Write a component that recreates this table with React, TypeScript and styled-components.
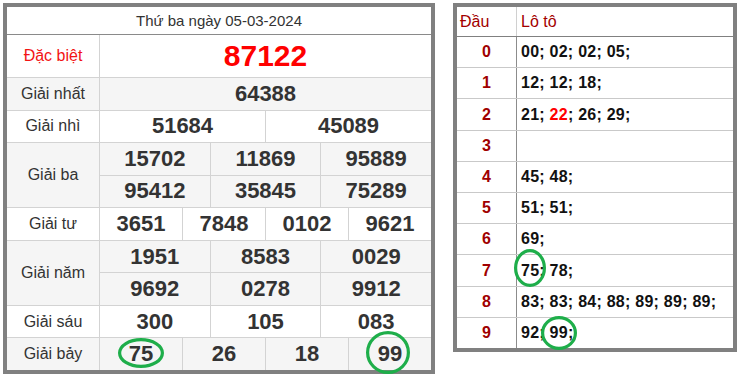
import styled, { createGlobalStyle } from 'styled-components'
import { ReactNode } from 'react'

const GlobalStyle = createGlobalStyle`
  html, body {
    margin: 0;
    padding: 0;
    background: #fff;
  }
  * {
    box-sizing: border-box;
  }
  body {
    font-family: 'Liberation Sans', Arial, sans-serif;
  }
`

type Prize = {
  label: string
  lines: string[][]
  gray?: boolean
  special?: boolean
}

const prizes: Prize[] = [
  { label: 'Đặc biệt', lines: [['87122']], special: true },
  { label: 'Giải nhất', lines: [['64388']], gray: true },
  { label: 'Giải nhì', lines: [['51684', '45089']] },
  {
    label: 'Giải ba',
    lines: [
      ['15702', '11869', '95889'],
      ['95412', '35845', '75289'],
    ],
    gray: true,
  },
  { label: 'Giải tư', lines: [['3651', '7848', '0102', '9621']] },
  {
    label: 'Giải năm',
    lines: [
      ['1951', '8583', '0029'],
      ['9692', '0278', '9912'],
    ],
    gray: true,
  },
  { label: 'Giải sáu', lines: [['300', '105', '083']] },
  { label: 'Giải bảy', lines: [['75', '26', '18', '99']], gray: true },
]

// circled numbers in "Giải bảy": [w, h, dx, dy]
const bayCircles: Record<string, [number, number, number, number]> = {
  '75': [46, 30, 0, -1],
  '99': [44, 43, -1.5, -1.5],
}

export default function App() {
  return (
    <>
      <GlobalStyle />
      <Page>
        <ResultTable>
          <Caption>Thứ ba ngày 05-03-2024</Caption>
          <PrizeGrid>
            {prizes.map((p) => {
              const cells = [
                <Label key={p.label} span={p.lines.length} gray={p.gray} special={p.special}>
                  {p.label}
                </Label>,
              ]
              p.lines.forEach((line, li) =>
                line.forEach((n, ni) => {
                  const c = p.label === 'Giải bảy' ? bayCircles[n] : undefined
                  cells.push(
                    <Num
                      key={`${p.label}-${li}-${ni}`}
                      span={12 / line.length}
                      gray={p.gray}
                      special={p.special}
                    >
                      {c ? (
                        <Circled w={c[0]} h={c[1]} dx={c[2]} dy={c[3]}>
                          {n}
                        </Circled>
                      ) : (
                        n
                      )}
                    </Num>
                  )
                })
              )
              return cells
            })}
          </PrizeGrid>
        </ResultTable>

        <LotoTable>
          <LotoHead>
            <HeadDau>Đầu</HeadDau>
            <HeadLoto>Lô tô</HeadLoto>
          </LotoHead>
          <LotoBody>
            <LotoRow>
              <Dau>0</Dau>
              <Loto>00; 02; 02; 05;</Loto>
            </LotoRow>
            <LotoRow>
              <Dau>1</Dau>
              <Loto>12; 12; 18;</Loto>
            </LotoRow>
            <LotoRow>
              <Dau>2</Dau>
              <Loto>
                21; <Hit>22</Hit>; 26; 29;
              </Loto>
            </LotoRow>
            <LotoRow>
              <Dau>3</Dau>
              <Loto />
            </LotoRow>
            <LotoRow>
              <Dau>4</Dau>
              <Loto>45; 48;</Loto>
            </LotoRow>
            <LotoRow>
              <Dau>5</Dau>
              <Loto>51; 51;</Loto>
            </LotoRow>
            <LotoRow>
              <Dau>6</Dau>
              <Loto>69;</Loto>
            </LotoRow>
            <LotoRow>
              <Dau>7</Dau>
              <Loto>
                <Circled w={32} h={38} dx={0} dy={-2.5}>
                  75
                </Circled>
                ; 78;
              </Loto>
            </LotoRow>
            <LotoRow>
              <Dau>8</Dau>
              <Loto>83; 83; 84; 88; 89; 89; 89;</Loto>
            </LotoRow>
            <LotoRow>
              <Dau>9</Dau>
              <Loto>
                92;{' '}
                <Circled w={36} h={34} dx={0} dy={0}>
                  99
                </Circled>
                ;
              </Loto>
            </LotoRow>
          </LotoBody>
        </LotoTable>
      </Page>
    </>
  )
}

function Circled({
  w,
  h,
  dx,
  dy,
  children,
}: {
  w: number
  h: number
  dx: number
  dy: number
  children: ReactNode
}) {
  return (
    <Ring>
      {children}
      <RingSvg
        width={w}
        height={h}
        viewBox={`0 0 ${w} ${h}`}
        style={{ marginLeft: -w / 2 + dx, marginTop: -h / 2 + dy }}
      >
        <ellipse cx={w / 2} cy={h / 2} rx={w / 2 - 1.6} ry={h / 2 - 1.6} fill="none" stroke="#1eae4a" strokeWidth="3.2" />
      </RingSvg>
    </Ring>
  )
}

const Page = styled.div`
  display: flex;
  align-items: flex-start;
  gap: 18px;
  padding: 3px 0 0 3px;
`

const ResultTable = styled.div`
  width: 432px;
  border: 4px solid #808080;
  background: #fff;
  color: #333;
`

const Caption = styled.div`
  height: 28px;
  border-bottom: 1px solid #8a8a8a;
  display: flex;
  align-items: center;
  justify-content: center;
  font-size: 15px;
  color: #333;
`

const PrizeGrid = styled.div`
  display: grid;
  grid-template-columns: 92px repeat(12, 1fr);
  grid-template-rows: 42px repeat(9, 1fr);
  height: 335px;
  gap: 1px;
  background: #d3d3d3;
`

const Cell = styled.div<{ span: number; gray?: boolean; special?: boolean }>`
  display: flex;
  align-items: center;
  justify-content: center;
  background: ${(p) => (p.gray ? '#f5f5f5' : '#fff')};
`

const Label = styled(Cell)`
  grid-column: 1;
  grid-row: span ${(p) => p.span};
  font-size: 16px;
  color: ${(p) => (p.special ? '#f21414' : '#333')};
`

const Num = styled(Cell)`
  grid-column: span ${(p) => p.span};
  font-weight: bold;
  font-size: ${(p) => (p.special ? '30px' : '22px')};
  color: ${(p) => (p.special ? '#f00' : '#333')};
`

const Ring = styled.span`
  position: relative;
  display: inline-block;
`

const RingSvg = styled.svg`
  position: absolute;
  left: 50%;
  top: 50%;
  overflow: visible;
  pointer-events: none;
  z-index: 2;
`

const LotoTable = styled.div`
  width: 284px;
  border: 4px solid #808080;
  background: #fff;
`

const LotoHead = styled.div`
  height: 30px;
  display: flex;
  border-bottom: 1px solid #808080;
  font-size: 16px;
  color: #a30000;
`

const HeadDau = styled.div`
  width: 60px;
  border-right: 1px solid #d0d0d0;
  display: flex;
  align-items: center;
  padding-left: 3px;
`

const HeadLoto = styled.div`
  flex: 1;
  display: flex;
  align-items: center;
  padding-left: 4px;
`

const LotoBody = styled.div`
  height: 311px;
  display: flex;
  flex-direction: column;
`

const LotoRow = styled.div`
  flex: 1;
  display: flex;
  border-bottom: 1px solid #c9c9c9;

  &:last-child {
    border-bottom: none;
  }
`

const Dau = styled.div`
  width: 60px;
  border-right: 1px solid #8c8c8c;
  display: flex;
  align-items: center;
  justify-content: center;
  font-size: 16px;
  font-weight: bold;
  color: #a00000;
`

const Loto = styled.div`
  flex: 1;
  display: flex;
  align-items: center;
  padding-left: 4px;
  font-size: 16px;
  font-weight: bold;
  letter-spacing: 0.25px;
  white-space: pre;
  color: #111;
`

const Hit = styled.span`
  color: #f00;
`
